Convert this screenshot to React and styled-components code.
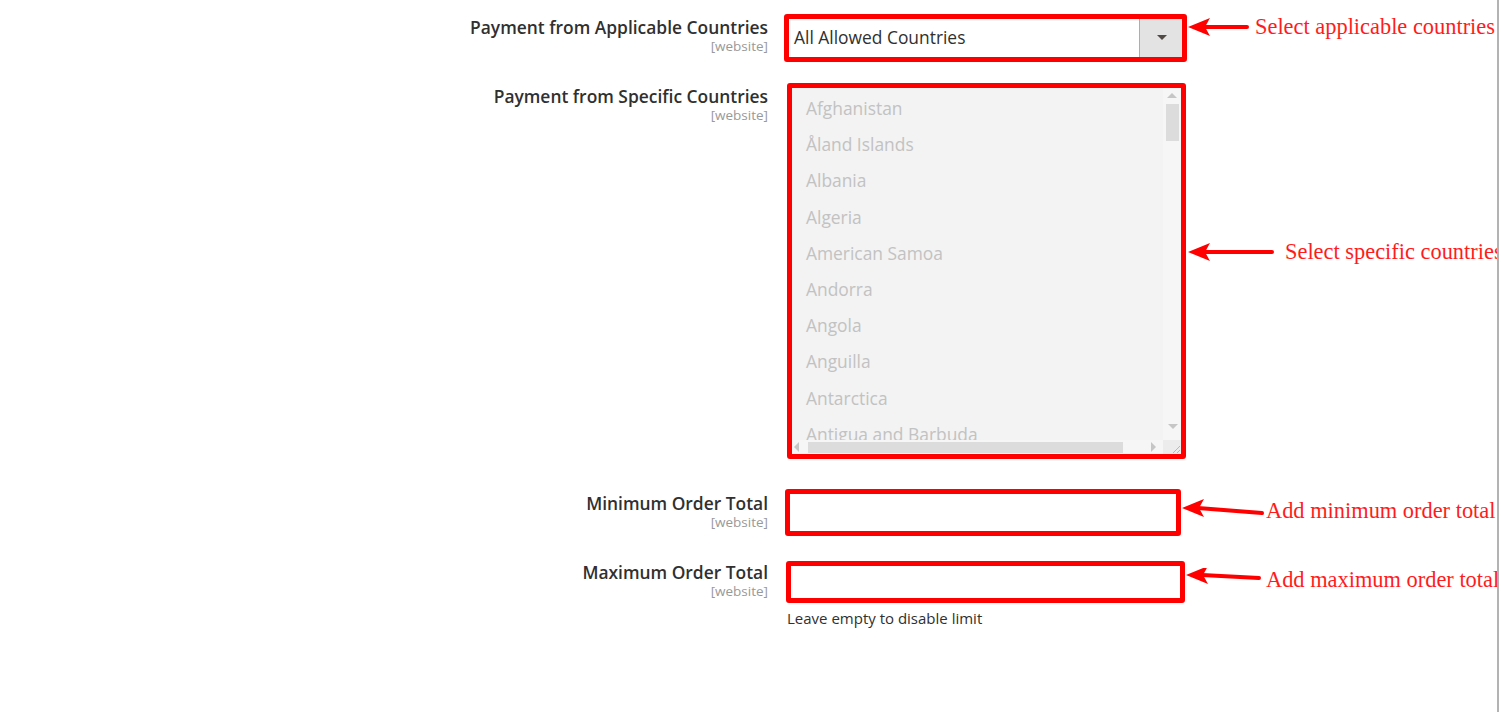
import React from "react";
import styled, { createGlobalStyle } from "styled-components";

const GlobalStyle = createGlobalStyle`
  html, body {
    margin: 0;
    padding: 0;
    background: #ffffff;
  }
  body {
    font-family: "Open Sans", "Liberation Sans", sans-serif;
  }
`;

const Page = styled.div`
  width: 1497px;
  height: 712px;
  border-right: 2px solid #b3b3b3;
  overflow: hidden;
  background: #ffffff;
`;

const Form = styled.div`
  display: flex;
  flex-direction: column;
`;

const Row = styled.div`
  display: grid;
  grid-template-columns: 768px auto 1fr;
  align-items: start;
  margin-top: ${(p) => p.$mt}px;
`;

const LabelCell = styled.div`
  text-align: right;
  padding-top: ${(p) => p.$pt}px;
`;

const Label = styled.div`
  font-family: "Open Sans", sans-serif;
  font-weight: 600;
  font-size: 17.4px;
  line-height: 22px;
  color: #303030;
  white-space: nowrap;
`;

const Scope = styled.div`
  font-family: "Open Sans", sans-serif;
  font-size: 13.5px;
  line-height: 16px;
  color: #999999;
`;

const Control = styled.div`
  margin-left: ${(p) => p.$ml}px;
  display: flex;
  flex-direction: column;
`;

const Frame = styled.div`
  box-sizing: border-box;
  width: ${(p) => p.$w}px;
  height: ${(p) => p.$h}px;
  border: 5px solid #ff0000;
  border-radius: 3px;
  background: #ffffff;
  overflow: hidden;
`;

const Select = styled.div`
  display: flex;
  height: 100%;
`;

const SelectValue = styled.div`
  flex: 1;
  display: flex;
  align-items: center;
  padding: 0 0 3px 5px;
  font-size: 17.4px;
  color: #303030;
`;

const SelectButton = styled.div`
  width: 42px;
  background: #e3e3e3;
  border-left: 1px solid #adadad;
  display: flex;
  align-items: center;
  justify-content: center;
  padding-bottom: 2px;
`;

const Caret = styled.span`
  width: 0;
  height: 0;
  border-left: ${(p) => p.$size}px solid transparent;
  border-right: ${(p) => p.$size}px solid transparent;
  border-top: ${(p) => p.$size}px solid ${(p) => p.$color};
  margin-left: 1px;
`;

const CaretUp = styled.span`
  width: 0;
  height: 0;
  border-left: 5px solid transparent;
  border-right: 5px solid transparent;
  border-bottom: 5px solid #c6c6c6;
`;

const CaretSide = styled.span`
  width: 0;
  height: 0;
  border-top: 5px solid transparent;
  border-bottom: 5px solid transparent;
  ${(p) => (p.$dir === "left" ? "border-right" : "border-left")}: 5px solid #c6c6c6;
`;

const MultiSelect = styled.div`
  height: 100%;
  background: #f3f3f3;
  display: grid;
  grid-template-columns: 1fr 18px;
  grid-template-rows: 1fr 14px;
`;

const OptionList = styled.div`
  overflow: hidden;
  padding: 2px 0 0 14px;
`;

const Option = styled.div`
  height: 36.2px;
  line-height: 36.2px;
  font-size: 17.4px;
  color: #c2c2c2;
  white-space: nowrap;
`;

const VScroll = styled.div`
  background: #f6f6f6;
  display: flex;
  flex-direction: column;
  align-items: center;
  padding-top: 5px;
  padding-bottom: 11px;
`;

const VThumb = styled.div`
  width: 13px;
  height: 37px;
  margin-top: 6px;
  background: #dcdcdc;
`;

const Spacer = styled.div`
  flex: 1;
`;

const HScroll = styled.div`
  background: #f6f6f6;
  display: flex;
  align-items: center;
  padding-left: 2px;
`;

const HThumb = styled.div`
  width: 315px;
  height: 11px;
  margin-left: 9px;
  background: #dcdcdc;
`;

const HRight = styled.div`
  margin-left: 28px;
  display: flex;
`;

const Corner = styled.div`
  background: #ececec;
  display: flex;
  align-items: flex-end;
  justify-content: flex-end;
`;

const Note = styled.div`
  margin-top: 5px;
  font-size: 15px;
  line-height: 20px;
  color: #303030;
  padding-left: 1px;
`;

const Annotation = styled.div`
  display: flex;
  align-items: center;
  margin-top: ${(p) => p.$mt}px;
  margin-left: ${(p) => p.$ml}px;
  height: 24px;
`;

const AnnotationText = styled.span`
  margin-left: ${(p) => p.$gap}px;
  font-family: "Liberation Serif", "Times New Roman", serif;
  font-size: 22.4px;
  line-height: 24px;
  color: #ff1c1c;
  white-space: nowrap;
`;

function Arrow({ width, y1, y2 }) {
  return (
    <svg width={width} height="24" viewBox={`0 0 ${width} 24`}>
      <path
        d={`M1 ${y1} L23 ${y1 - 9} L18 ${y1} L23 ${y1 + 9} Z`}
        fill="#ff0000"
      />
      <line
        x1="17"
        y1={y1}
        x2={width - 3}
        y2={y2}
        stroke="#ff0000"
        strokeWidth="4"
        strokeLinecap="round"
      />
    </svg>
  );
}

function Callout({ text, arrow, ml, mt, gap }) {
  return (
    <Annotation $ml={ml} $mt={mt}>
      <Arrow {...arrow} />
      <AnnotationText $gap={gap}>{text}</AnnotationText>
    </Annotation>
  );
}

const countries = [
  "Afghanistan",
  "Åland Islands",
  "Albania",
  "Algeria",
  "American Samoa",
  "Andorra",
  "Angola",
  "Anguilla",
  "Antarctica",
  "Antigua and Barbuda",
];

function FieldLabel({ title, pt }) {
  return (
    <LabelCell $pt={pt}>
      <Label>{title}</Label>
      <Scope>[website]</Scope>
    </LabelCell>
  );
}

export default function App() {
  return (
    <Page>
      <GlobalStyle />
      <Form>
        <Row $mt={14}>
          <FieldLabel title="Payment from Applicable Countries" pt={2} />
          <Control $ml={16}>
            <Frame $w={403} $h={48}>
              <Select>
                <SelectValue>All Allowed Countries</SelectValue>
                <SelectButton>
                  <Caret $size={5} $color="#514943" />
                </SelectButton>
              </Select>
            </Frame>
          </Control>
          <Callout
            text="Select applicable countries"
            arrow={{ width: 63, y1: 12, y2: 12 }}
            ml={0}
            mt={1}
            gap={5}
          />
        </Row>

        <Row $mt={21}>
          <FieldLabel title="Payment from Specific Countries" pt={2} />
          <Control $ml={19}>
            <Frame $w={399} $h={376}>
              <MultiSelect>
                <OptionList>
                  {countries.map((c) => (
                    <Option key={c}>{c}</Option>
                  ))}
                </OptionList>
                <VScroll>
                  <CaretUp />
                  <VThumb />
                  <Spacer />
                  <Caret $size={5} $color="#c6c6c6" />
                </VScroll>
                <HScroll>
                  <CaretSide $dir="left" />
                  <HThumb />
                  <HRight>
                    <CaretSide $dir="right" />
                  </HRight>
                </HScroll>
                <Corner>
                  <svg width="10" height="10" viewBox="0 0 10 10">
                    <line x1="2" y1="9" x2="9" y2="2" stroke="#b8b8b8" strokeWidth="1" />
                    <line x1="6" y1="9" x2="9" y2="6" stroke="#b8b8b8" strokeWidth="1" />
                  </svg>
                </Corner>
              </MultiSelect>
            </Frame>
          </Control>
          <Callout
            text="Select specific countries"
            arrow={{ width: 88, y1: 12, y2: 12 }}
            ml={1}
            mt={157}
            gap={10}
          />
        </Row>

        <Row $mt={30}>
          <FieldLabel title="Minimum Order Total" pt={3} />
          <Control $ml={17}>
            <Frame $w={396} $h={47} />
          </Control>
          <Callout
            text="Add minimum order total"
            arrow={{ width: 84, y1: 9, y2: 14 }}
            ml={0}
            mt={10}
            gap={1}
          />
        </Row>

        <Row $mt={25}>
          <FieldLabel title="Maximum Order Total" pt={0} />
          <Control $ml={18}>
            <Frame $w={399} $h={42} />
            <Note>Leave empty to disable limit</Note>
          </Control>
          <Callout
            text="Add maximum order total"
            arrow={{ width: 77, y1: 7, y2: 10 }}
            ml={0}
            mt={7}
            gap={4}
          />
        </Row>
      </Form>
    </Page>
  );
}
